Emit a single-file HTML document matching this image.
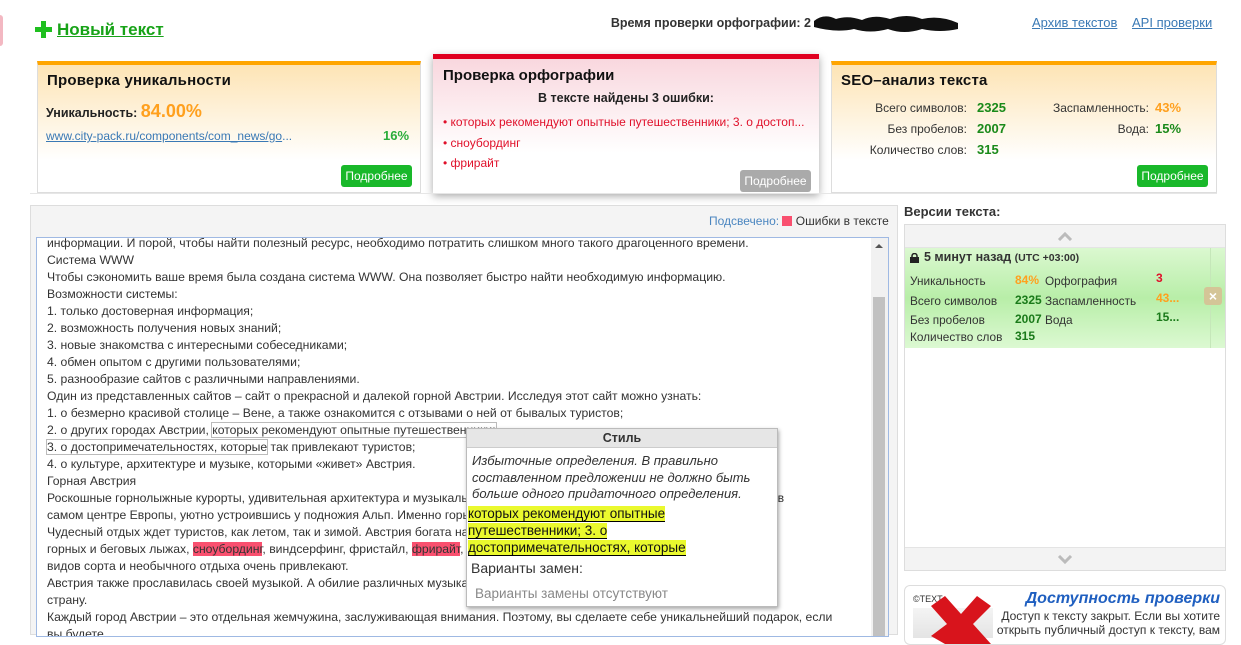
<!DOCTYPE html>
<html><head><meta charset="utf-8">
<style>
*{box-sizing:border-box;margin:0;padding:0}
body{width:1241px;height:631px;overflow:hidden;background:#fff;font-family:"Liberation Sans","DejaVu Sans",sans-serif;font-size:12px;color:#222;position:relative}
.abs{position:absolute}
.card{position:absolute;border:1px solid #ddd;border-top:4px solid #ffa500}
.card h3{font-size:15px;font-weight:bold;color:#111;position:absolute;left:9px;top:7px;letter-spacing:0.2px}
.btn{position:absolute;color:#fff;font-size:12px;border-radius:3px;text-align:center;line-height:22px;width:71px;height:22px}
.g{background:#19b82a}
.lab{position:absolute;text-align:right;font-size:12px;color:#333;white-space:nowrap}
.val{position:absolute;font-weight:bold;font-size:13px}
.ta{position:absolute;left:36px;top:237px;width:853px;height:400px;border:1px solid #9fb9e3;background:#fff;overflow:hidden}
.ln{position:absolute;left:10px;white-space:nowrap;font-size:12.2px;color:#333;line-height:17px}
.err{background:#f9506f}
.tip{position:absolute;left:466px;top:428px;width:312px;height:179px;background:#fff;border:1px solid #bbb;box-shadow:1px 2px 4px rgba(0,0,0,.35);z-index:5}
.hl{background:#eaf92e;border-bottom:1px solid #000}
.vr{position:absolute;font-size:11.8px;color:#333;white-space:nowrap}
.vv{position:absolute;font-size:12px;font-weight:bold}
</style></head><body>
<div class="abs" style="left:0;top:15px;width:3px;height:31px;background:#f3b8c2;border-radius:0 3px 3px 0"></div>
<svg class="abs" style="left:35px;top:21px" width="17" height="17"><rect x="6" y="0" width="5" height="17" fill="#1fbf1f"/><rect x="0" y="6" width="17" height="5" fill="#1fbf1f"/></svg>
<div class="abs" style="left:57px;top:20px;font-size:17px;font-weight:bold;color:#18a318;text-decoration:underline">Новый текст</div>

<div class="abs" style="right:430px;top:16px;font-size:12.5px;font-weight:bold;color:#333;white-space:nowrap">Время проверки орфографии: 2</div>
<svg class="abs" style="left:812px;top:11px" width="148" height="24"><path d="M2 10 Q12 2 24 8 Q36 4 50 9 Q62 3 78 8 Q95 2 110 8 Q128 4 146 12 L146 18 Q128 22 110 18 Q92 24 76 18 Q58 23 42 18 Q24 22 2 16Z" fill="#111"/></svg>
<div class="abs" style="left:1032px;top:15px;font-size:13px;color:#3a79b5;text-decoration:underline">Архив текстов</div>
<div class="abs" style="left:1132px;top:15px;font-size:13px;color:#3a79b5;text-decoration:underline">API проверки</div>

<!-- card 1 -->
<div class="card" style="left:37px;top:61px;width:384px;height:132px;background:linear-gradient(#fde4b5,#fff 75%)">
<h3>Проверка уникальности</h3>
<div class="abs" style="left:8px;top:36px;font-size:12.5px;font-weight:bold;color:#222">Уникальность: <span style="font-size:18px;color:#ffa01e;font-weight:bold">84.00%</span></div>
<div class="abs" style="left:8px;top:64px;font-size:12px;color:#3a79b5"><u>www.city-pack.ru/components/com_news/go</u>...</div>
<div class="abs" style="left:345px;top:63px;font-size:13px;font-weight:bold;color:#2aad3a">16%</div>
<div class="btn g" style="left:303px;top:100px">Подробнее</div>
</div>

<!-- card 2 -->
<div class="abs" style="left:433px;top:54px;width:386px;height:139px;border-top:5px solid #e00020;background:linear-gradient(#f9d7de,#fff 70%);box-shadow:0 3px 8px rgba(0,0,0,.35)">
<div class="abs" style="left:10px;top:8px;font-size:15px;font-weight:bold;color:#111">Проверка орфографии</div>
<div class="abs" style="left:0;width:100%;text-align:center;top:32px;font-size:12.5px;font-weight:bold;color:#222">В тексте найдены 3 ошибки:</div>
<div class="abs" style="left:10px;top:56px;font-size:12px;color:#e0102a;white-space:nowrap">• которых рекомендуют опытные путешественники; 3. о достоп...</div>
<div class="abs" style="left:10px;top:77px;font-size:12px;color:#e0102a">• сноубординг</div>
<div class="abs" style="left:10px;top:97px;font-size:12px;color:#e0102a">• фрирайт</div>
<div class="btn" style="left:307px;top:111px;background:#aaa">Подробнее</div>
</div>

<!-- card 3 -->
<div class="card" style="left:831px;top:61px;width:386px;height:132px;background:linear-gradient(#fde4b5,#fff 75%)">
<h3>SEO–анализ текста</h3>
<div class="lab" style="right:249px;top:36px">Всего символов:</div><div class="val" style="left:145px;top:35px;color:#1a8a1a">2325</div>
<div class="lab" style="right:249px;top:57px">Без пробелов:</div><div class="val" style="left:145px;top:56px;color:#1a8a1a">2007</div>
<div class="lab" style="right:249px;top:78px">Количество слов:</div><div class="val" style="left:145px;top:77px;color:#1a8a1a">315</div>
<div class="lab" style="right:67px;top:36px">Заспамленность:</div><div class="val" style="left:323px;top:35px;color:#ffa01e">43%</div>
<div class="lab" style="right:67px;top:57px">Вода:</div><div class="val" style="left:323px;top:56px;color:#1a8a1a">15%</div>
<div class="btn g" style="left:305px;top:100px">Подробнее</div>
</div>
<div class="abs" style="left:30px;top:193px;width:1187px;height:1px;background:#e6e6e6"></div>

<!-- main panel -->
<div class="abs" style="left:30px;top:205px;width:868px;height:430px;background:#f4f4f4;border:1px solid #ddd"></div>
<div class="abs" style="left:709px;top:214px;font-size:12px;color:#4b86c0">Подсвечено: <span style="display:inline-block;width:10px;height:10px;background:#f9506f;vertical-align:-1px"></span> <span style="color:#333">Ошибки в тексте</span></div>
<div class="ta">
<div class="ln" style="top:-3px">информации. И порой, чтобы найти полезный ресурс, необходимо потратить слишком много такого драгоценного времени.</div>
<div class="ln" style="top:14px">Система WWW</div>
<div class="ln" style="top:31px">Чтобы сэкономить ваше время была создана система WWW. Она позволяет быстро найти необходимую информацию.</div>
<div class="ln" style="top:48px">Возможности системы:</div>
<div class="ln" style="top:65px">1. только достоверная информация;</div>
<div class="ln" style="top:82px">2. возможность получения новых знаний;</div>
<div class="ln" style="top:99px">3. новые знакомства с интересными собеседниками;</div>
<div class="ln" style="top:116px">4. обмен опытом с другими пользователями;</div>
<div class="ln" style="top:133px">5. разнообразие сайтов с различными направлениями.</div>
<div class="ln" style="top:150px">Один из представленных сайтов – сайт о прекрасной и далекой горной Австрии. Исследуя этот сайт можно узнать:</div>
<div class="ln" style="top:167px">1. о безмерно красивой столице – Вене, а также ознакомится с отзывами о ней от бывалых туристов;</div>
<div class="ln" style="top:184px">2. о других городах Австрии, <span style="outline:1px solid #bbb">которых рекомендуют опытные путешественники;</span></div>
<div class="ln" style="top:201px"><span style="outline:1px solid #bbb">3. о достопримечательностях, которые</span> так привлекают туристов;</div>
<div class="ln" style="top:218px">4. о культуре, архитектуре и музыке, которыми «живет» Австрия.</div>
<div class="ln" style="top:235px">Горная Австрия</div>
<div class="ln" style="top:252px">Роскошные горнолыжные курорты, удивительная архитектура и музыкальное наследие – все это Австрия. Расположена страна в</div>
<div class="ln" style="top:269px">самом центре Европы, уютно устроившись у подножия Альп. Именно горы привлекают сюда множество туристов.</div>
<div class="ln" style="top:286px">Чудесный отдых ждет туристов, как летом, так и зимой. Австрия богата на курорты, где можно опробовать катание на</div>
<div class="ln" style="top:303px">горных и беговых лыжах, <span class="err">сноубординг</span>, виндсерфинг, фристайл, <span class="err">фрирайт</span>, и многое другое. Множество захватывающих</div>
<div class="ln" style="top:320px">видов сорта и необычного отдыха очень привлекают.</div>
<div class="ln" style="top:337px">Австрия также прославилась своей музыкой. А обилие различных музыкальных фестивалей посетить эту прекрасную</div>
<div class="ln" style="top:354px">страну.</div>
<div class="ln" style="top:371px">Каждый город Австрии – это отдельная жемчужина, заслуживающая внимания. Поэтому, вы сделаете себе уникальнейший подарок, если</div>
<div class="ln" style="top:388px">вы будете</div>
<div class="abs" style="right:0;top:0;width:17px;height:400px;background:#f1f1f1"></div>
<div class="abs" style="right:3px;top:59px;width:12px;height:340px;background:#c1c1c1"></div>
<div class="abs" style="right:5px;top:6px;width:0;height:0;border-left:4px solid transparent;border-right:4px solid transparent;border-bottom:4px solid #555"></div>
</div>

<!-- tooltip -->
<div class="tip">
<div style="height:19px;background:#e6e6e6;border-bottom:1px solid #ccc;text-align:center;font-weight:bold;font-size:12.5px;line-height:19px;color:#333">Стиль</div>
<div style="position:absolute;left:5px;top:24px;width:300px;font-style:italic;font-size:13px;line-height:16.5px;color:#333">Избыточные определения. В правильно составленном предложении не должно быть больше одного придаточного определения.</div>
<div style="position:absolute;left:1px;top:76px;font-size:13.5px;line-height:17px;color:#111"><span class="hl">которых рекомендуют опытные</span><br><span class="hl">путешественники; 3. о</span><br><span class="hl">достопримечательностях, которые</span></div>
<div style="position:absolute;left:4px;top:131px;font-size:14px;color:#333">Варианты замен:</div>
<div style="position:absolute;left:8px;top:157px;font-size:13.5px;color:#888">Варианты замены отсутствуют</div>
</div>

<!-- right panel -->
<div class="abs" style="left:904px;top:204px;font-size:13px;font-weight:bold;color:#333">Версии текста:</div>
<div class="abs" style="left:904px;top:224px;width:322px;height:347px;border:1px solid #ddd;background:#fff">
<div class="abs" style="left:0;top:0;width:320px;height:23px;background:#f3f3f3;border-bottom:1px solid #e4e4e4"></div>
<svg class="abs" style="left:152px;top:7px" width="16" height="9"><path d="M2 8 L8 2 L14 8" stroke="#bbb" stroke-width="3" fill="none"/></svg>
<div class="abs" style="left:0;top:23px;width:320px;height:100px;background:linear-gradient(#dbf8d0,#b8eea8 50%,#dcf9d2)"></div>
<div class="abs" style="left:305px;top:23px;width:1px;height:100px;background:#c5e7b9"></div>
<div class="abs" style="left:299px;top:62px;width:18px;height:18px;background:#d4c597;border-radius:3px;color:#fff;font-weight:bold;text-align:center;line-height:18px;font-size:14px">×</div>
<svg class="abs" style="left:5px;top:28px" width="9" height="10"><rect x="0" y="4" width="9" height="6" fill="#222"/><path d="M2 5 V3 a2.5 2.5 0 0 1 5 0 V5" stroke="#222" stroke-width="1.5" fill="none"/></svg>
<div class="abs" style="left:19px;top:25px;font-size:12.5px;font-weight:bold;color:#333">5 минут назад <span style="font-size:10.5px">(UTC +03:00)</span></div>
<div class="vr" style="left:5px;top:49px">Уникальность</div><div class="vv" style="left:110px;top:48px;color:#ffa01e">84%</div>
<div class="vr" style="left:5px;top:69px">Всего символов</div><div class="vv" style="left:110px;top:68px;color:#1a7a1a">2325</div>
<div class="vr" style="left:5px;top:88px">Без пробелов</div><div class="vv" style="left:110px;top:87px;color:#1a7a1a">2007</div>
<div class="vr" style="left:5px;top:105px">Количество слов</div><div class="vv" style="left:110px;top:104px;color:#1a7a1a">315</div>
<div class="vr" style="left:140px;top:49px">Орфография</div><div class="vv" style="left:251px;top:46px;color:#e0102a">3</div>
<div class="vr" style="left:140px;top:69px">Заспамленность</div><div class="vv" style="left:251px;top:66px;color:#ffa01e">43...</div>
<div class="vr" style="left:140px;top:88px">Вода</div><div class="vv" style="left:251px;top:85px;color:#1a7a1a">15...</div>
<div class="abs" style="left:0;top:322px;width:320px;height:23px;background:#f3f3f3;border-top:1px solid #e4e4e4"></div>
<svg class="abs" style="left:152px;top:330px" width="16" height="9"><path d="M2 1 L8 7 L14 1" stroke="#bbb" stroke-width="3" fill="none"/></svg>
</div>

<div class="abs" style="left:904px;top:585px;width:322px;height:60px;border:1px solid #ddd;border-radius:6px;background:#fff;overflow:hidden">
<div class="abs" style="left:8px;top:8px;font-size:9px;color:#333">©TEXT</div>
<div class="abs" style="left:8px;top:22px;width:80px;height:30px;background:linear-gradient(#f4f4f4,#e4e4e4)"></div>
<svg class="abs" style="left:18px;top:8px" width="72" height="52"><path d="M8 12 L22 2 L38 20 L54 2 L68 12 L50 30 L68 50 L22 50 L8 42 L24 30Z" fill="#d8141c"/></svg>
<div class="abs" style="right:5px;top:4px;font-size:16px;font-weight:bold;font-style:italic;color:#1f5fc0">Доступность проверки</div>
<div class="abs" style="right:5px;top:23px;font-size:12px;color:#333;text-align:right;line-height:14px;white-space:nowrap">Доступ к тексту закрыт. Если вы хотите<br>открыть публичный доступ к тексту, вам</div>
</div>
</body></html>
